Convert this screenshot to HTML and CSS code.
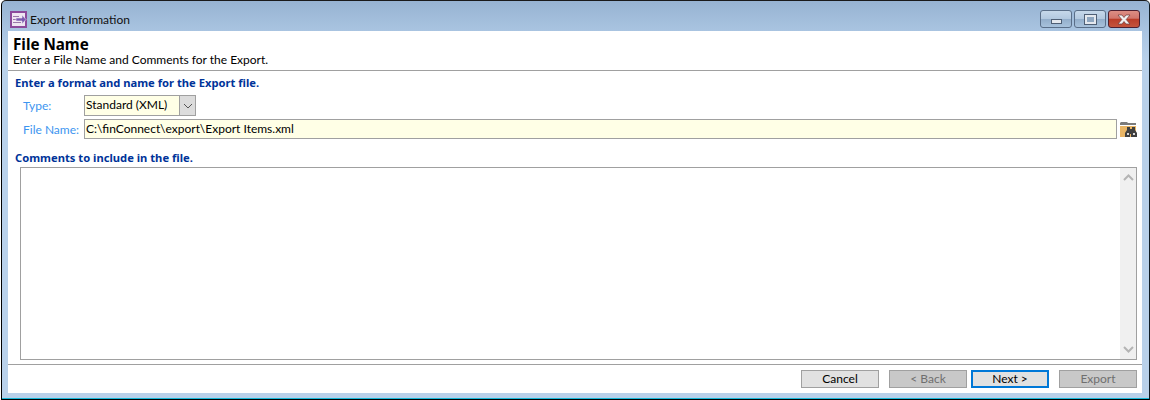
FILE: index.html
```html
<!DOCTYPE html>
<html lang="en">
<head>
<meta charset="utf-8">
<title>Export Information</title>
<link rel="stylesheet" href="styles.css">
</head>
<body>
<div class="window">
  <div class="titlebar">
    <svg class="app-icon" width="17" height="17" viewBox="0 0 17 17">
      <rect x="0" y="0" width="17" height="17" fill="#8c4a9c"/>
      <rect x="2" y="2" width="13" height="13" fill="#efe6f2"/>
      <path d="M3 5.500h6M3 8.500h4M3 11.500h8" stroke="#9a78aa" stroke-width="1"/>
      <path d="M6 7h6V4l4 4.500-4 4.500v-3H6z" fill="#7a5ab0" stroke="#efe6f2" stroke-width="0.6"/>
    </svg>
    <span class="title">Export Information</span>
    <div class="controls">
      <div class="ctl"><span class="glyph-min"></span></div>
      <div class="ctl"><span class="glyph-max"></span></div>
      <div class="ctl ctl-close">
        <svg width="16" height="11" viewBox="0 0 16 11"><path d="M2 1h4l2 2.500L10 1h4l-3.800 4.500L14 10h-4L8 7.500 6 10H2l3.800-4.500z" fill="#f2f2f2" stroke="#6b3a3a" stroke-width="0.7"/></svg>
      </div>
    </div>
  </div>
  <div class="client">
    <header class="head">
      <h1 class="head-title">File Name</h1>
      <p class="head-sub">Enter a File Name and Comments for the Export.</p>
    </header>
    <main class="body">
      <h2 class="section">Enter a format and name for the Export file.</h2>
      <div class="row row-type">
        <label class="label">Type:</label>
        <div class="combo"><span class="combo-text">Standard (XML)</span>
          <span class="combo-btn"><svg width="10" height="6" viewBox="0 0 10 6"><path d="M1 1l4 4 4-4" fill="none" stroke="#555" stroke-width="1"/></svg></span>
        </div>
      </div>
      <div class="row row-file">
        <label class="label">File Name:</label>
        <div class="input">C:\finConnect\export\Export Items.xml</div>
        <svg class="browse" width="17" height="15" viewBox="0 0 17 15">
          <path d="M1 0h6l1 1h8v2H0V1z" fill="#7c7c7c"/>
          <path d="M0 4h16v11H0z" fill="#e9b565"/>
          <path d="M7 5h3v2h2V5h3v3l2 3v4h-6v-3h-1v3H5v-4l2-3z" fill="#3f3f3f"/>
          <path d="M7 11h2v2H7zM13 11h2v2h-2z" fill="#d8d8d8"/>
        </svg>
      </div>
      <h2 class="section section-comments">Comments to include in the file.</h2>
      <div class="memo">
        <div class="scroll">
          <svg width="11" height="7" viewBox="0 0 11 7"><path d="M1 6l4.500-4.500L10 6" fill="none" stroke="#b4b4b4" stroke-width="2"/></svg>
          <svg width="11" height="7" viewBox="0 0 11 7"><path d="M1 1l4.500 4.500L10 1" fill="none" stroke="#b4b4b4" stroke-width="2"/></svg>
        </div>
      </div>
    </main>
    <footer class="foot">
      <button class="btn">Cancel</button>
      <button class="btn btn-off btn-back">&lt; Back</button>
      <button class="btn btn-default">Next &gt;</button>
      <button class="btn btn-off">Export</button>
    </footer>
  </div>
</div>
</body>
</html>
```
FILE: styles.css
```css
* { box-sizing: border-box; }
html, body { margin: 0; padding: 0; }
body { width: 1150px; height: 400px; overflow: hidden; background: #fff; font-family: "Lato", "Noto Sans", sans-serif; }
.window {
  width: 1149px; height: 400px;
  margin-left: 1px;
  display: flex; flex-direction: column;
  padding: 0 7px 6px 6px;
  background: linear-gradient(to bottom, #97b3d2 0, #a9c4e1 30px, #b9d1ea 60px, #b9d1ea 100%);
  border-top: 1px solid #1a1a1a;
  border-left: 1px solid #000;
  border-right: 1px solid #0f1c24;
  border-bottom: 1px solid #000;
  border-radius: 5px 5px 0 0;
  box-shadow: inset 0 -1px 0 #18b7d8;
}
.titlebar { height: 30px; flex: none; display: flex; align-items: flex-start; padding-left: 2px; }
.app-icon { flex: none; margin-top: 10px; }
.title { margin-left: 3px; margin-top: 11px; font-size: 12px; line-height: 16px; color: #111; }
.controls { margin-left: auto; display: flex; gap: 2px; margin-top: 9px; margin-right: 2px; }
.ctl {
  width: 32px; height: 18px;
  border: 1px solid #5a6e88; border-radius: 3px;
  background: linear-gradient(to bottom, #c6d8ea 0, #b2c8df 50%, #93aecb 52%, #a8c2dc 100%);
  display: flex; align-items: center; justify-content: center;
}
.ctl-close { background: linear-gradient(to bottom, #dd8e84 0, #d2766c 45%, #bb3d28 52%, #c4543c 100%); border-color: #4e2030; }
.glyph-min { width: 11px; height: 5px; margin-top: 4px; background: #e4e8ee; border: 1px solid #4f5f75; }
.glyph-max { width: 11px; height: 9px; border: 2px solid #e4e8ee; outline: 1px solid #4f5f75; background: #8ea6c0; }
.client { flex: 1; min-height: 0; background: #fff; display: flex; flex-direction: column; }
.head { height: 40px; flex: none; padding: 4px 0 0 5px; border-bottom: 1px solid #a0a0a0; }
.head-title { margin: 0; font-family: "Noto Sans", sans-serif; font-size: 15.200px; line-height: 18px; font-weight: 700; color: #000; }
.head-sub { margin: 0; font-size: 12px; line-height: 14px; color: #000; }
.body { flex: 1; min-height: 0; display: flex; flex-direction: column; padding: 4px 5px 0 7px; border-bottom: 1px solid #a0a0a0; }
.section { margin: 0; font-family: "Noto Sans", sans-serif; font-size: 11.200px; line-height: 16px; font-weight: 700; color: #003399; }
.row { display: flex; align-items: center; }
.row-type { margin-top: 4px; height: 21px; }
.row-file { margin-top: 3px; height: 20px; }
.label { width: 69px; padding-left: 8px; flex: none; font-size: 12px; color: #3d95f0; }
.combo { width: 112px; height: 21px; display: flex; border: 1px solid #a0a0a0; background: #ffffe6; }
.combo-text { flex: 1; font-size: 12px; line-height: 18px; padding-left: 1px; color: #000; }
.combo-btn { width: 16px; background: #dcdcdc; border-left: 1px solid #a0a0a0; display: flex; align-items: center; justify-content: center; }
.input { width: 1033px; height: 20px; border: 1px solid #a0a0a0; background: #ffffe6; font-size: 12px; line-height: 18px; padding-left: 1px; color: #000; flex: none; }
.browse { margin-left: 3px; flex: none; }
.section-comments { margin-top: 11px; margin-bottom: 1px; }
.memo { flex: 1; min-height: 0; margin: 0 0 4px 5px; border: 1px solid #a0a0a0; display: flex; justify-content: flex-end; }
.scroll { width: 16px; background: #f0f0f0; display: flex; flex-direction: column; justify-content: space-between; align-items: center; padding: 6px 0; }
.foot { height: 28px; flex: none; display: flex; justify-content: flex-end; align-items: flex-start; padding: 5px 5px 0 0; }
.btn { width: 78px; height: 18px; padding: 0 0 1px; border: 1px solid #a0a0a0; background: #e1e1e1; font-family: inherit; font-size: 12px; line-height: 15px; color: #000; margin-left: 4px; }
.btn:first-child { margin-right: 6px; }
.btn-off { background: #c8c8c8; color: #6f6f6f; }
.btn-default { border: 2px solid #0078d7; line-height: 13px; margin-right: 6px; }
```
